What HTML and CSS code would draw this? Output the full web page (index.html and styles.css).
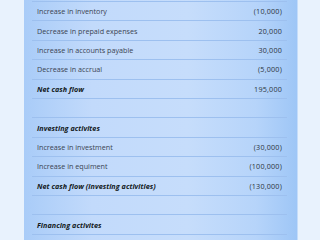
FILE: index.html
```html
<!DOCTYPE html>
<html>
<head>
<meta charset="utf-8">
<link rel="stylesheet" href="styles.css">
</head>
<body>
<div class="page">
  <div class="panel">
    <div class="list">
      <div class="row"><span></span><span></span></div>
      <div class="row"><span>Increase in inventory</span><span class="num">(10,000)</span></div>
      <div class="row"><span>Decrease in prepaid expenses</span><span class="num">20,000</span></div>
      <div class="row"><span>Increase in accounts payable</span><span class="num">30,000</span></div>
      <div class="row"><span>Decrease in accrual</span><span class="num">(5,000)</span></div>
      <div class="row total"><span>Net cash flow</span><span class="num">195,000</span></div>
      <div class="row"><span></span><span></span></div>
      <div class="row total"><span>Investing activites</span><span></span></div>
      <div class="row"><span>Increase in investment</span><span class="num">(30,000)</span></div>
      <div class="row"><span>Increase in equiment</span><span class="num">(100,000)</span></div>
      <div class="row total"><span>Net cash flow (investing activities)</span><span class="num">(130,000)</span></div>
      <div class="row"><span></span><span></span></div>
      <div class="row total"><span>Financing activites</span><span></span></div>
      <div class="row"><span></span><span></span></div>
    </div>
  </div>
</div>
</body>
</html>
```
FILE: styles.css
```css
html, body {
  margin: 0;
  padding: 0;
}
body {
  width: 320px;
  height: 240px;
  overflow: hidden;
  background: #e8f2fd;
  font-family: "Open Sans", "Noto Sans", sans-serif;
}
.page {
  display: flex;
  height: 240px;
  padding-left: 24px;
}
.panel {
  width: 273px;
  height: 240px;
  box-sizing: border-box;
  padding: 0 10px 0 8px;
  background: linear-gradient(90deg, #a9ccf8 0%, #c2dafb 25%, #c6ddfb 60%, #b6d4fa 85%, #9ec6f6 100%);
  box-shadow: 1px 0 0 #c4dcfa;
  overflow: hidden;
}
.list {
  margin-top: -17.4px;
}
.row {
  display: flex;
  justify-content: space-between;
  align-items: center;
  height: 18.42px;
  border-bottom: 1px solid #9dc0ef;
  padding: 0 5px;
  font-size: 7.2px;
  color: #3b4452;
  letter-spacing: 0;
}
.num {
  color: #2c3440;
  letter-spacing: 0.2px;
}
.total {
  font-weight: 700;
  font-style: italic;
  color: #121820;
  letter-spacing: 0.05px;
}
.total .num {
  font-weight: 400;
  font-style: normal;
  color: #2c3440;
  letter-spacing: 0.2px;
}
```
